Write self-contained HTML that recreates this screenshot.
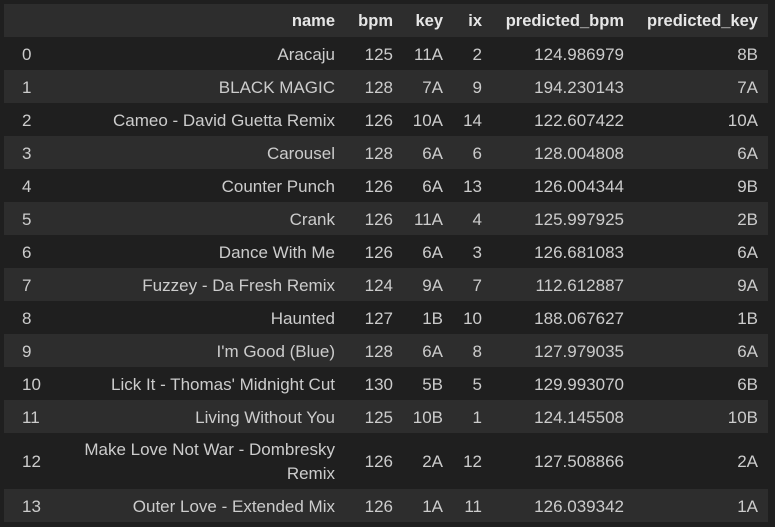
<!DOCTYPE html>
<html><head><meta charset="utf-8"><style>
body{margin:0;background:#1f1f1f;width:775px;height:527px;overflow:hidden;font-family:"Liberation Sans",sans-serif;font-size:17px;color:#cccccc}
.t{position:absolute;left:4px;top:4px;width:764px}
.r{position:relative;height:33px;background:#1f1f1f}
.r.l{background:#2d2d2d}
.r span{position:absolute;top:1px;height:100%;display:flex;align-items:center;justify-content:flex-end;white-space:nowrap}
.r span.i{left:18px;justify-content:flex-start}
.n{left:56px;width:275px;text-align:right}
.b{left:341px;width:48px}.k{left:396px;width:43px}.x{left:446px;width:32px}.p{left:486px;width:134px}.q{left:626px;width:128px}
.h{font-weight:bold;color:#e6e6e6;font-size:16.5px}
.tall{height:56px}
.tall .n{line-height:24px}
</style></head><body><div class="t">
<div class="r l h"><span class="n">name</span><span class="b">bpm</span><span class="k">key</span><span class="x">ix</span><span class="p">predicted_bpm</span><span class="q">predicted_key</span></div>
<div class="r"><span class="i">0</span><span class="n">Aracaju</span><span class="b">125</span><span class="k">11A</span><span class="x">2</span><span class="p">124.986979</span><span class="q">8B</span></div>
<div class="r l"><span class="i">1</span><span class="n">BLACK MAGIC</span><span class="b">128</span><span class="k">7A</span><span class="x">9</span><span class="p">194.230143</span><span class="q">7A</span></div>
<div class="r"><span class="i">2</span><span class="n">Cameo - David Guetta Remix</span><span class="b">126</span><span class="k">10A</span><span class="x">14</span><span class="p">122.607422</span><span class="q">10A</span></div>
<div class="r l"><span class="i">3</span><span class="n">Carousel</span><span class="b">128</span><span class="k">6A</span><span class="x">6</span><span class="p">128.004808</span><span class="q">6A</span></div>
<div class="r"><span class="i">4</span><span class="n">Counter Punch</span><span class="b">126</span><span class="k">6A</span><span class="x">13</span><span class="p">126.004344</span><span class="q">9B</span></div>
<div class="r l"><span class="i">5</span><span class="n">Crank</span><span class="b">126</span><span class="k">11A</span><span class="x">4</span><span class="p">125.997925</span><span class="q">2B</span></div>
<div class="r"><span class="i">6</span><span class="n">Dance With Me</span><span class="b">126</span><span class="k">6A</span><span class="x">3</span><span class="p">126.681083</span><span class="q">6A</span></div>
<div class="r l"><span class="i">7</span><span class="n">Fuzzey - Da Fresh Remix</span><span class="b">124</span><span class="k">9A</span><span class="x">7</span><span class="p">112.612887</span><span class="q">9A</span></div>
<div class="r"><span class="i">8</span><span class="n">Haunted</span><span class="b">127</span><span class="k">1B</span><span class="x">10</span><span class="p">188.067627</span><span class="q">1B</span></div>
<div class="r l"><span class="i">9</span><span class="n">I'm Good (Blue)</span><span class="b">128</span><span class="k">6A</span><span class="x">8</span><span class="p">127.979035</span><span class="q">6A</span></div>
<div class="r"><span class="i">10</span><span class="n">Lick It - Thomas' Midnight Cut</span><span class="b">130</span><span class="k">5B</span><span class="x">5</span><span class="p">129.993070</span><span class="q">6B</span></div>
<div class="r l"><span class="i">11</span><span class="n">Living Without You</span><span class="b">125</span><span class="k">10B</span><span class="x">1</span><span class="p">124.145508</span><span class="q">10B</span></div>
<div class="r tall"><span class="i">12</span><span class="n">Make Love Not War - Dombresky<br>Remix</span><span class="b">126</span><span class="k">2A</span><span class="x">12</span><span class="p">127.508866</span><span class="q">2A</span></div>
<div class="r l"><span class="i">13</span><span class="n">Outer Love - Extended Mix</span><span class="b">126</span><span class="k">1A</span><span class="x">11</span><span class="p">126.039342</span><span class="q">1A</span></div>
</div></body></html>
